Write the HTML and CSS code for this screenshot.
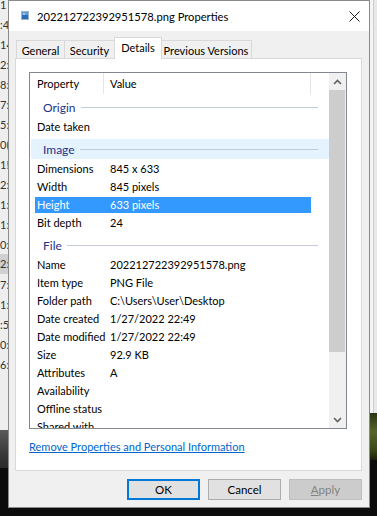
FILE: index.html
```html
<!DOCTYPE html>
<html lang="en">
<head>
    <meta charset="UTF-8">
    <meta name="viewport" content="width=device-width, initial-scale=1.0">
    <title>202212722392951578.png Properties</title>
    <link rel="stylesheet" href="styles.css">
</head>
<body>
    <div class="desktop">
        <div class="strip-left">
            <div class="files">
                <div class="file-row">1</div>
                <div class="file-row">:4</div>
                <div class="file-row">14</div>
                <div class="file-row">2:</div>
                <div class="file-row">8:</div>
                <div class="file-row">7:</div>
                <div class="file-row">5:</div>
                <div class="file-row">0(</div>
                <div class="file-row">1!</div>
                <div class="file-row">2:</div>
                <div class="file-row">1:</div>
                <div class="file-row">1:</div>
                <div class="file-row">0:</div>
                <div class="file-row hot">2:</div>
                <div class="file-row">7:</div>
                <div class="file-row">1:</div>
                <div class="file-row">:5</div>
                <div class="file-row">0:</div>
                <div class="file-row">6:</div>
            </div>
            <div class="photo-left"></div>
        </div>

        <div class="dialog">
            <div class="titlebar">
                <svg class="title-icon" width="8" height="9" viewBox="0 0 8 9">
                    <rect x="0.5" y="0.5" width="7" height="8" fill="#ffffff" stroke="#9fb3c8"/>
                    <rect x="1" y="1" width="6" height="7" fill="#2b6cb8"/>
                    <rect x="1" y="1" width="6" height="3" fill="#5c9ad8"/>
                    <circle cx="3" cy="3" r="0.8" fill="#ffffff"/>
                </svg>
                <span class="title-text">202212722392951578.png Properties</span>
                <svg class="close-btn" width="11" height="11" viewBox="0 0 11 11">
                    <path d="M0.5 0.5 L10.5 10.5 M10.5 0.5 L0.5 10.5" stroke="#1a1a1a" stroke-width="1" fill="none"/>
                </svg>
            </div>

            <div class="dialog-body">
                <div class="tabs">
                    <div class="tab tab-general">General</div>
                    <div class="tab tab-security">Security</div>
                    <div class="tab tab-details active">Details</div>
                    <div class="tab tab-versions">Previous Versions</div>
                </div>

                <div class="tab-panel">
                    <div class="list-box">
                        <div class="list-content">
                            <div class="list-header">
                                <div class="col-name">Property</div>
                                <div class="col-value">Value</div>
                            </div>

                            <div class="group">Origin</div>
                            <div class="prop-row"><span>Date taken</span><span></span></div>

                            <div class="group hot">Image</div>
                            <div class="prop-row"><span>Dimensions</span><span>845 x 633</span></div>
                            <div class="prop-row"><span>Width</span><span>845 pixels</span></div>
                            <div class="prop-row selected"><span>Height</span><span>633 pixels</span></div>
                            <div class="prop-row"><span>Bit depth</span><span>24</span></div>

                            <div class="group">File</div>
                            <div class="prop-row"><span>Name</span><span>202212722392951578.png</span></div>
                            <div class="prop-row"><span>Item type</span><span>PNG File</span></div>
                            <div class="prop-row"><span>Folder path</span><span>C:\Users\User\Desktop</span></div>
                            <div class="prop-row"><span>Date created</span><span>1/27/2022 22:49</span></div>
                            <div class="prop-row"><span>Date modified</span><span>1/27/2022 22:49</span></div>
                            <div class="prop-row"><span>Size</span><span>92.9 KB</span></div>
                            <div class="prop-row"><span>Attributes</span><span>A</span></div>
                            <div class="prop-row"><span>Availability</span><span></span></div>
                            <div class="prop-row"><span>Offline status</span><span></span></div>
                            <div class="prop-row"><span>Shared with</span><span></span></div>
                        </div>

                        <div class="scrollbar">
                            <div class="scroll-btn">
                                <svg width="9" height="6" viewBox="0 0 9 6"><path d="M1 5 L4.5 1.5 L8 5" stroke="#606060" stroke-width="1.6" fill="none"/></svg>
                            </div>
                            <div class="scroll-thumb"></div>
                            <div class="scroll-track"></div>
                            <div class="scroll-btn">
                                <svg width="9" height="6" viewBox="0 0 9 6"><path d="M1 1 L4.5 4.5 L8 1" stroke="#606060" stroke-width="1.6" fill="none"/></svg>
                            </div>
                        </div>
                    </div>

                    <a class="remove-link" href="#">Remove Properties and Personal Information</a>
                </div>

                <div class="buttons">
                    <button class="btn default">OK</button>
                    <button class="btn">Cancel</button>
                    <button class="btn disabled"><u>A</u>pply</button>
                </div>
            </div>
        </div>

        <div class="strip-right">
            <div class="scroll-edge"></div>
            <div class="photo-right"></div>
        </div>
    </div>
</body>
</html>
```

FILE: styles.css
```css
body {
    margin: 0;
    padding: 0;
    background-color: #0c0c0c;
    font-family: Lato, Roboto, sans-serif;
    font-size: 11px;
    color: #000;
}

.desktop {
    display: flex;
    width: 377px;
    height: 516px;
    overflow: hidden;
}

/* what shows of the desktop behind the dialog */

.strip-left {
    width: 8px;
    display: flex;
    flex-direction: column;
}

.files {
    height: 430px;
    background-color: #eeeeee;
    overflow: hidden;
}

.file-row {
    height: 20px;
    line-height: 10px;
    font-size: 11px;
    color: #333;
    white-space: nowrap;
}

.file-row.hot {
    background-color: #d0d0d0;
    line-height: 20px;
    margin-top: -6px;
    margin-bottom: 6px;
}

.photo-left {
    height: 38px;
    background: linear-gradient(180deg, #5a5a5a, #3a3a3a 60%, #2a2a2a);
}

.strip-right {
    width: 7px;
    display: flex;
    flex-direction: column;
}

.scroll-edge {
    height: 413px;
    background: linear-gradient(90deg, #f4f4f4 0, #f4f4f4 3px, #cdcdcd 3px, #cdcdcd 4px, #e8e8e8 4px);
}

.photo-right {
    height: 47px;
    background: linear-gradient(180deg, #2c3512, #55662a 40%, #3a4716 80%, #1b1f0c);
}

/* dialog */

.dialog {
    width: 362px;
    height: 508px;
    box-sizing: border-box;
    border: 1px solid #8a8a8a;
    display: flex;
    flex-direction: column;
    background-color: #f0f0f0;
}

.titlebar {
    height: 30px;
    background-color: #ffffff;
    display: flex;
    align-items: center;
    padding-left: 12px;
    padding-right: 9px;
}

.title-icon {
    margin-top: -1px;
}

.title-text {
    margin-left: 8px;
    flex: 1;
    font-size: 11.2px;
    white-space: nowrap;
}

.close-btn {
    margin-top: 1px;
}

.dialog-body {
    flex: 1;
    padding: 6px 7px 7px 6px;
    display: flex;
    flex-direction: column;
}

.tabs {
    display: flex;
    align-items: flex-end;
    height: 21px;
    padding-left: 1px;
}

.tab {
    height: 18px;
    line-height: 19px;
    box-sizing: border-box;
    border: 1px solid #d9d9d9;
    border-bottom: none;
    background-color: #f0f0f0;
    text-align: center;
    white-space: nowrap;
}

.tab + .tab {
    margin-left: -1px;
}

.tab-general { width: 49px; }
.tab-security { width: 51px; }
.tab-details { width: 48px; }
.tab-versions { width: 92px; }

.tab.active {
    height: 22px;
    line-height: 20px;
    margin-bottom: -1px;
    margin-right: -1px;
    background-color: #ffffff;
    position: relative;
    z-index: 1;
}

.tab-panel {
    width: 347px;
    height: 413px;
    box-sizing: border-box;
    border: 1px solid #d9d9d9;
    background-color: #ffffff;
    padding: 13px 0 0 13px;
}

.list-box {
    width: 318px;
    height: 357px;
    box-sizing: border-box;
    border: 1px solid #828790;
    display: flex;
}

.list-content {
    flex: 1;
    overflow: hidden;
}

.list-header {
    display: flex;
    height: 21px;
    line-height: 22px;
}

.list-header .col-name {
    width: 66px;
    padding-left: 7px;
    border-right: 1px solid #e5e5e5;
}

.list-header .col-value {
    width: 200px;
    padding-left: 6px;
    border-right: 1px solid #e5e5e5;
}

.group {
    display: flex;
    align-items: center;
    height: 21px;
    margin-top: 3px;
    padding-left: 13px;
    padding-right: 11px;
    color: #1e3287;
    font-size: 12px;
}

.group::after {
    content: "";
    flex: 1;
    height: 1px;
    margin-left: 5px;
    background-color: #c3cad9;
}

.group.hot {
    background-color: #e5f3ff;
    margin-left: 1px;
    padding-left: 12px;
    height: 20px;
    margin-bottom: 1px;
}

.prop-row {
    display: grid;
    grid-template-columns: 80px 1fr;
    height: 18px;
    line-height: 18px;
    white-space: nowrap;
}

.prop-row span:first-child {
    padding-left: 7px;
}

.prop-row.selected {
    grid-template-columns: 75px 1fr;
    height: 16px;
    line-height: 16px;
    margin: 1px 18px 1px 5px;
    background-color: #3399ff;
    color: #ffffff;
}

.prop-row.selected span:first-child {
    padding-left: 2px;
}

.scrollbar {
    width: 17px;
    background-color: #f0f0f0;
    display: flex;
    flex-direction: column;
}

.scroll-btn {
    height: 17px;
    display: flex;
    align-items: center;
    justify-content: center;
}

.scroll-thumb {
    height: 262px;
    margin-right: 1px;
    background-color: #cdcdcd;
}

.scroll-track {
    flex: 1;
}

.remove-link {
    display: block;
    margin-top: 10px;
    height: 16px;
    line-height: 16px;
    color: #0066cc;
    text-decoration: underline;
    white-space: nowrap;
    width: max-content;
}

.buttons {
    display: flex;
    justify-content: flex-end;
    gap: 8px;
    margin-top: 8px;
}

.btn {
    width: 73px;
    height: 21px;
    box-sizing: border-box;
    border: 1px solid #adadad;
    background-color: #e1e1e1;
    font-family: Lato, Roboto, sans-serif;
    font-size: 11.5px;
    color: #000;
    padding: 0;
}

.btn.default {
    border: 2px solid #0078d7;
}

.btn.disabled {
    background-color: #cccccc;
    border-color: #bfbfbf;
    color: #838383;
}
```
